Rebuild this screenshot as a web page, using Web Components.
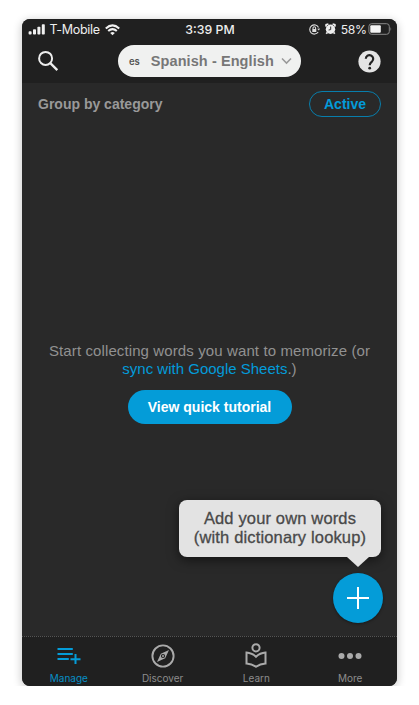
<!DOCTYPE html>
<html lang="en"><head><meta charset="utf-8"><title>Vocabulary</title>
<style>html,body{margin:0;background:#fff}body{font-family:"Liberation Sans",Arial,sans-serif}</style></head>
<body><phone-screen></phone-screen>
<script>
const define=(name,html)=>customElements.define(name,class extends HTMLElement{
  constructor(){super();const t=document.createElement('template');t.innerHTML=html;
    this.attachShadow({mode:'open'}).append(t.content.cloneNode(true));}
});

define('status-bar',`<style>
:host{display:grid;grid-template-columns:1fr auto 1fr;align-items:center;height:21px;padding:0 5px 0 6px;color:#eee;font:12.5px Inter,sans-serif;white-space:nowrap}
div{display:flex;align-items:center}svg{display:block;flex:none}
.t{font-weight:500;font-size:12.3px}.r{justify-content:flex-end}
</style>
<div><svg width="18" height="12" viewBox="0 0 18 12" fill="#f0f0f0"><rect x=".6" y="7.2" width="3" height="3.3" rx=".8"/><rect x="5" y="5.2" width="3" height="5.3" rx=".8"/><rect x="9.4" y="2.8" width="3" height="7.7" rx=".8"/><rect x="13.8" y=".2" width="3" height="10.3" rx=".8"/></svg>
<span style="margin-left:3.5px;letter-spacing:-.32px">T-Mobile</span>
<svg style="margin-left:5px" width="15" height="12" viewBox="0 0 15 12" fill="none" stroke="#f0f0f0" stroke-width="2"><path d="M.8 4.5Q7.5-1.7 14.2 4.5M3.2 7.1Q7.5 3.2 11.8 7.1"/><path d="M7.5 11.3 5.2 9Q7.5 7.2 9.8 9Z" fill="#f0f0f0" stroke="none"/></svg></div>
<div class="t">3:39 PM</div>
<div class="r"><svg width="11" height="11" viewBox="0 0 11 11" fill="none" stroke="#ddd" stroke-width="1.1"><path d="M9.5 3.5A4.6 4.6 0 1 0 9.2 8"/><path d="m8.1 4.8 1.8 1.6L11 4.4Z" fill="#ddd" stroke="none"/><rect x="3.3" y="5" width="4" height="3" fill="#ddd" stroke="none"/><path d="M4 5V4a1.3 1.3 0 0 1 2.6 0v1"/></svg>
<svg style="margin-left:5px;margin-top:-2px" width="11" height="12" viewBox="0 0 11 12"><circle cx="5.5" cy="6.2" r="4.7" fill="#eee"/><path d="M1 3.7 1.2 1.6 3.4 1M10 3.7 9.8 1.6 7.6 1M2.2 9.5 1.3 10.7M8.8 9.5 9.7 10.7" stroke="#eee" stroke-width="1.8" fill="none"/><path d="M5.7 3.5v3.1L3.6 7" stroke="#333" fill="none"/></svg>
<span style="margin:0 1.5px 0 4.5px;font-size:12.2px;letter-spacing:-.4px">58%</span>
<svg style="margin-top:-1px" width="24" height="12" viewBox="0 0 24 12"><rect x=".9" y=".7" width="20.4" height="10.6" rx="2.7" fill="none" stroke="#888"/><rect x="2.3" y="2.2" width="10.5" height="7.6" rx="1" fill="#f4f4f4"/><path d="M22.5 4q1.5 2 0 4Z" fill="#888"/></svg></div>`);

define('language-picker',`<style>
:host{display:flex;align-items:center;box-sizing:border-box;width:183px;height:32px;border-radius:16px;background:#f0f1f0;padding:0 9px 0 11px;white-space:nowrap;color:#777}
b{font-size:14.5px;letter-spacing:.08px}.c{font:600 9.5px Inter,sans-serif;color:#555;margin-right:11px}svg{margin-left:auto}
</style><span class="c">es</span><b><slot></slot></b><svg width="11" height="8" viewBox="0 0 11 8" fill="none" stroke="#999" stroke-width="1.5"><path d="m1 1.4 4.5 4.7L10 1.4"/></svg>`);

define('top-bar',`<style>
:host{display:flex;align-items:center;justify-content:space-between;height:42px;padding:0 16px 0 15px}svg{display:block}
language-picker{margin-left:2px}
</style><svg width="22" height="22" viewBox="0 0 22 22" fill="none" stroke="#ededed" stroke-width="2"><circle cx="8.6" cy="8.4" r="6.5"/><path d="m13.3 13.1 7 7" stroke-width="2.3"/></svg>
<language-picker>Spanish - English</language-picker>
<svg width="23" height="23" viewBox="0 0 23 23"><circle cx="11.5" cy="11.5" r="11.1" fill="#e4e4e4"/><path d="M7.8 8.7a3.7 3.7 0 1 1 6.2 2.8c-1.5 1.3-2.3 1.8-2.3 3.8" fill="none" stroke="#222" stroke-width="2.2"/><circle cx="11.7" cy="18.2" r="1.4" fill="#222"/></svg>`);

define('group-bar',`<style>
:host{display:flex;align-items:center;justify-content:space-between;padding:8px 16px 0;height:26px;color:#999;font-weight:700;font-size:14px;white-space:nowrap}
button{box-sizing:border-box;width:72px;height:26px;padding:0;border:1px solid #087eac;border-radius:13px;background:none;color:#039bd9;font:inherit}
</style><span><slot></slot></span><button>Active</button>`);

define('empty-state',`<style>
:host{display:flex;flex-direction:column;align-items:center;text-align:center;color:#919191;font-size:15px;line-height:18px;white-space:nowrap}
.a{letter-spacing:.11px}a{color:#039bd9}button{margin-top:12px;width:164px;height:34px;border:0;padding:0;border-radius:17px;background:#049cd8;color:#fff;font:700 14px "Liberation Sans",Arial,sans-serif}
</style><div><span class="a">Start collecting words you want to memorize (or</span><br><a>sync with Google Sheets</a>.)</div><button>View quick tutorial</button>`);

define('hint-bubble',`<style>
:host{position:absolute;right:16px;bottom:79px;width:202px;height:57px;box-sizing:border-box;padding-top:9px;border-radius:8px;background:#e3e3e3;color:#494949;text-align:center;font-size:16.5px;letter-spacing:.15px;line-height:19px;white-space:nowrap;box-shadow:0 3px 12px #0008;-webkit-text-stroke:.3px #494949}
:host::after{content:"";position:absolute;right:12px;top:57px;border:11px solid transparent;border-top:10px solid #e3e3e3;border-bottom:0}
</style><slot></slot>`);

define('add-button',`<style>
:host{position:absolute;right:14px;bottom:13px;width:50px;height:50px;border-radius:50%;background:#049cd8;box-shadow:0 1px 3px #0006}
svg{display:block}</style><svg width="50" height="50" viewBox="0 0 50 50" stroke="#fff" stroke-width="2"><path d="M25 14v22M14 25h22"/></svg>`);

define('tab-item',`<style>
:host{display:flex;flex-direction:column;align-items:center;flex:1;color:#8d8d8d;font:10px/14px Inter,sans-serif}
::slotted(svg){display:block;width:26px;height:26px;margin:6px 0 2px}
</style><slot name="icon"></slot><span><slot></slot></span>`);

define('tab-bar',`<style>
:host{display:flex;box-sizing:border-box;height:50px;border-top:1px dotted #555;background:#202020}
</style>
<tab-item style="color:#078fc6"><svg slot="icon" viewBox="0 0 26 26" fill="none" stroke="#049cd8" stroke-width="2"><path d="M1.5 6h15.3M1.5 11h15.3M1.5 16h11.3M14.5 16.3h10M19.5 11v10"/></svg>Manage</tab-item>
<tab-item><svg slot="icon" viewBox="0 0 26 26"><circle cx="13" cy="13" r="10.6" fill="none" stroke="#aaa" stroke-width="1.9"/><path fill="#aaa" fill-rule="evenodd" d="M19 7 15.2 15.2 7 19 10.8 10.8ZM13 10.9A2.1 2.1 0 1 0 13 15.1A2.1 2.1 0 0 0 13 10.9Z"/><circle cx="13" cy="13" r="1" fill="#aaa"/></svg>Discover</tab-item>
<tab-item><svg slot="icon" viewBox="0 0 26 26" fill="none" stroke="#aaa" stroke-width="2"><circle cx="13" cy="4.8" r="3.6"/><path d="M3.5 9.6Q9 10 13 13.8Q17 10 22.5 9.6V20.5Q17 20.8 13 23.8Q9 20.8 3.5 20.5Z"/></svg>Learn</tab-item>
<tab-item><svg slot="icon" viewBox="0 0 26 26" fill="#aaa"><circle cx="4.5" cy="13" r="3"/><circle cx="13" cy="13" r="3"/><circle cx="21.5" cy="13" r="3"/></svg>More</tab-item>`);

define('phone-screen',`<style>
:host{display:flex;flex-direction:column;width:375px;height:667px;margin:19px 22px 0;border-radius:8px;background:#292929;box-shadow:0 2px 9px 1px #0003;overflow:hidden}
header{background:#202020;height:64px}main{position:relative;flex:1;display:flex;flex-direction:column}
empty-state{margin-top:225px}
</style><header><status-bar></status-bar><top-bar></top-bar></header>
<main><group-bar>Group by category</group-bar><empty-state></empty-state>
<hint-bubble>Add your own words<br>(with dictionary lookup)</hint-bubble><add-button></add-button></main>
<tab-bar></tab-bar>`);
</script></body></html>
